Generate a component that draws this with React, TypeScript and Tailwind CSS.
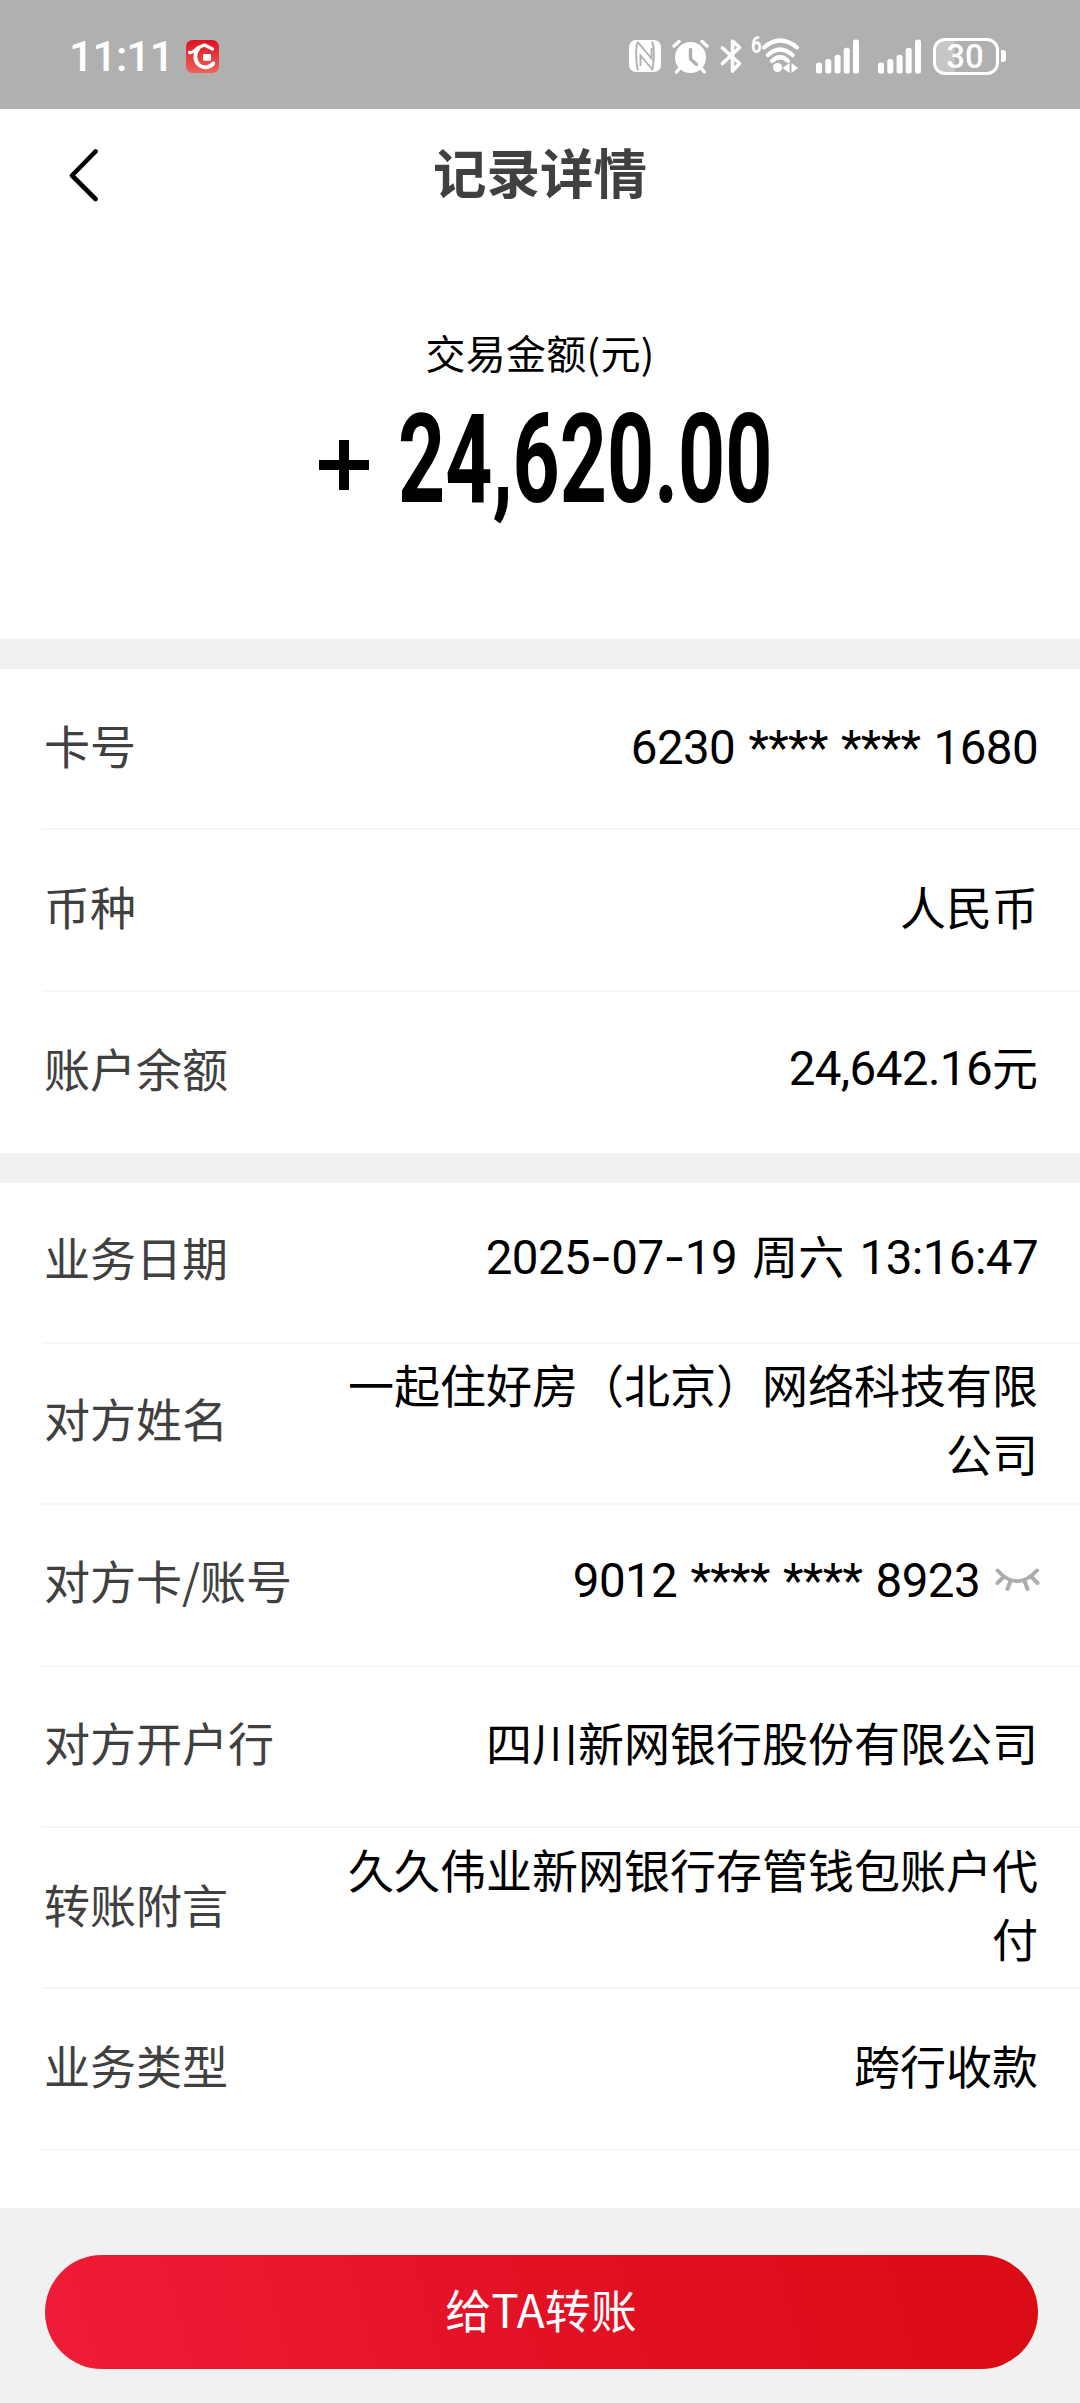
import { FC, ReactNode } from 'react'

interface RowProps {
  label: string
  children: ReactNode
  last?: boolean
  className?: string
}

const SignalIcon: FC<{ className?: string }> = ({ className }) => (
  <svg viewBox="0 0 44 35" fill="currentColor" className={`w-11 h-[35px] ${className}`}>
    <rect x="0" y="23.5" width="6" height="11" rx="2.6" />
    <rect x="9.3" y="20" width="6" height="14.5" rx="2.6" />
    <rect x="18.6" y="15.7" width="6" height="18.8" rx="2.6" />
    <rect x="27.7" y="8.8" width="6" height="25.7" rx="2.6" />
    <rect x="37" y="0.5" width="6" height="34" rx="2.6" />
  </svg>
)

const StatusBar: FC = () => (
  <div className="h-[109px] bg-[#b0b0b0] text-white flex items-center pt-[3px] pl-[69px] pr-[74px]">
    <span className="w-[104px] text-[43px] leading-none font-medium tracking-[-1px] font-['Roboto',sans-serif] whitespace-nowrap">
      11:11
    </span>
    {/* bank app */}
    <svg viewBox="0 0 33 33" className="w-[33px] h-[33px] ml-[13px]">
      <defs>
        <linearGradient id="app" x1="0" y1="0" x2="0" y2="1">
          <stop offset="0" stopColor="#dc1322" />
          <stop offset="1" stopColor="#f0625a" />
        </linearGradient>
      </defs>
      <rect width="33" height="33" rx="6.5" fill="url(#app)" />
      <path d="M3.5 12.5C7 13.800 9.500 9 13 7.2L18.500 5L26.500 9" fill="none" stroke="#fff" strokeWidth="3.2" strokeLinecap="round" strokeLinejoin="round" />
      <path d="M12.500 8.500C8 13.500 8.500 20.500 12.500 24.500c4.500 4.500 11 3.600 14.800-1.200" fill="none" stroke="#fff" strokeWidth="3.8" strokeLinecap="round" />
      <rect x="17" y="14" width="8" height="6.8" rx="1" fill="#fff" />
    </svg>
    <div className="flex-1" />
    {/* nfc */}
    <svg viewBox="0 0 32 32" className="w-8 h-8">
      <rect width="32" height="32" rx="7" fill="#fff" />
      <path d="M9 1.500Q7 5 7.200 15T9 30.500M9.500 3l13 15.500V8M23 1.500q2 4 1.800 14T23 30.500M22.500 28.500l-11-13V26" fill="none" stroke="#b0b0b0" strokeWidth="1.900" />
    </svg>
    {/* alarm */}
    <svg viewBox="0 0 37 35" className="w-[37px] h-[35px] ml-[11px]">
      <path d="M2 7l5-4.500M35 7l-5-4.500M8 29l-3.500 4M29 29l3.500 4" stroke="#fff" strokeWidth="3.4" strokeLinecap="round" />
      <circle cx="18.500" cy="18.500" r="15.500" fill="#fff" />
      <path d="M18.500 10.500v9.500l6 5.500" fill="none" stroke="#b0b0b0" strokeWidth="3.4" strokeLinecap="round" strokeLinejoin="round" />
    </svg>
    {/* bluetooth */}
    <svg viewBox="0 0 23 36" className="w-[23px] h-9 ml-[11px]">
      <path d="M2.500 10l17 15.500-7 7.500V3l7 6.500L2.500 25.500" fill="none" stroke="#fff" strokeWidth="3.6" strokeLinecap="round" strokeLinejoin="round" />
    </svg>
    <span className="w-[10px] ml-[8px] mb-[22px] text-[23px] leading-none font-bold font-['Roboto',sans-serif] scale-x-[0.8] origin-left">
      6
    </span>
    {/* wifi */}
    <svg viewBox="0 0 38 36" className="w-[38px] h-9 ml-px">
      <path d="M2 9.500Q18 -4.500 35 9.500M6 17Q18 6 30.500 17M10 23Q18 15.500 26 23" fill="none" stroke="#fff" strokeWidth="4.2" strokeLinecap="round" />
      <circle cx="15.500" cy="29.500" r="4.600" fill="#fff" />
      <path d="M20.500 30l7-5v10zM36 30l-6.500-5v10z" fill="#fff" />
    </svg>
    <SignalIcon className="ml-4" />
    <SignalIcon className="ml-[18px]" />
    <div className="ml-[11px] w-[66px] h-[37px] rounded-[12px] border-[3px] border-white bg-[linear-gradient(90deg,#c6c6c6_18px,#b0b0b0_19px)] flex items-center justify-center pr-[2px] text-[33px] leading-none font-medium font-['Roboto',sans-serif]">
      30
    </div>
    <div className="ml-[2px] w-[5px] h-3 rounded-r-[3px] bg-white" />
  </div>
)

const Num: FC<{ children: string }> = ({ children }) => (
  <span className="font-['Roboto','Noto_Sans_CJK_SC',sans-serif] text-[47.5px] tracking-[-0.6px] [word-spacing:2px]">
    {children.split('-').map((part, i) => (
      <span key={i}>
        {i > 0 && <span className="font-['Inter',sans-serif]">-</span>}
        {part}
      </span>
    ))}
  </span>
)

const Row: FC<RowProps> = ({ label, children, last, className = 'pb-[9px]' }) => (
  <div
    className={`ml-[42px] pr-[42px] h-[161.3px] flex items-center justify-between ${className} ${
      last ? '' : 'border-b-2 border-[#f6f6f6]'
    }`}
  >
    <span className="pl-[2px] text-[46px] text-[#404040] whitespace-nowrap">{label}</span>
    <div className="w-[696px] text-right text-[46px] leading-[69px] text-black flex items-center justify-end">
      <div>{children}</div>
    </div>
  </div>
)

const App: FC = () => {
  return (
    <div className="w-[1080px] h-[2403px] overflow-hidden bg-white flex flex-col font-['Noto_Sans_CJK_SC',sans-serif]">
      <StatusBar />

      <div className="h-[132px] flex items-center px-[69px]">
        <svg viewBox="0 0 29 53" className="w-[29px] h-[53px]">
          <path d="M26.500 2.500L3 26.500l23.500 23.500" fill="none" stroke="#000" strokeWidth="4.6" strokeLinecap="round" strokeLinejoin="round" />
        </svg>
        <h1 className="flex-1 text-center text-[53.5px] leading-none font-bold text-[#404040] mr-[29px] pb-[9px]">记录详情</h1>
      </div>

      <div className="h-[398px] flex flex-col items-center pt-[81px]">
        <div className="text-[40px] leading-[60px] tracking-[0.3px] text-black">交易金额(元)</div>
        <div className="mt-[15px] h-[124px] w-[448px] ml-[5px] flex items-center text-black font-['Roboto',sans-serif] font-bold">
          <svg viewBox="0 0 50 50" className="w-[50px] h-[50px] mt-3 shrink-0">
            <path d="M0 25h50M25 0v50" stroke="#000" strokeWidth="10" />
          </svg>
          <span className="ml-[29px] text-[125px] leading-none origin-left scale-x-[0.658] whitespace-nowrap">24,620.00</span>
        </div>
      </div>

      <div className="h-[30px] bg-[#f0f0f0] shrink-0" />

      <div>
        <Row label="卡号">
          <div className="pt-[5px]">
            <Num>6230 **** **** 1680</Num>
          </div>
        </Row>
        <Row label="币种">人民币</Row>
        <Row label="账户余额" last>
          <Num>24,642.16</Num>元
        </Row>
      </div>

      <div className="h-[30px] bg-[#f0f0f0] shrink-0" />

      <div className="flex-1 overflow-hidden">
        <Row label="业务日期" className="pb-[12px] [word-spacing:5px]">
          <Num>2025-07-19</Num> 周六 <Num>13:16:47</Num>
        </Row>
        <Row label="对方姓名" className="pb-[12px]">
          一起住好房（北京）网络科技有限公司
        </Row>
        <Row label="对方卡/账号" className="pb-[12px]">
          <div className="flex items-center pt-[4px]">
            <Num>9012 **** **** 8923</Num>
            <svg viewBox="0 0 45 23" className="w-[45px] h-[23px] ml-[15px] mr-[-2px] mb-[3px]">
              <path d="M2.500 2.500Q22 24 42 2.500M8.500 9L2.500 15M36.500 9l6 6M15.500 13l-3 8M29.500 13l3 8" fill="none" stroke="#adadad" strokeWidth="4" strokeLinecap="round" />
            </svg>
          </div>
        </Row>
        <Row label="对方开户行">四川新网银行股份有限公司</Row>
        <Row label="转账附言">久久伟业新网银行存管钱包账户代付</Row>
        <Row label="业务类型">跨行收款</Row>
      </div>

      <div className="h-[195px] bg-[#f1f1f1] pl-[44.5px] pr-[42.5px] pt-[47px] shrink-0">
        <button className="w-full h-[114px] rounded-full pb-[9px] bg-[linear-gradient(75deg,#f01c38,#e31124_50%,#d90b14)] text-white text-[46px] leading-none">
          给TA转账
        </button>
      </div>
    </div>
  )
}

export default App
